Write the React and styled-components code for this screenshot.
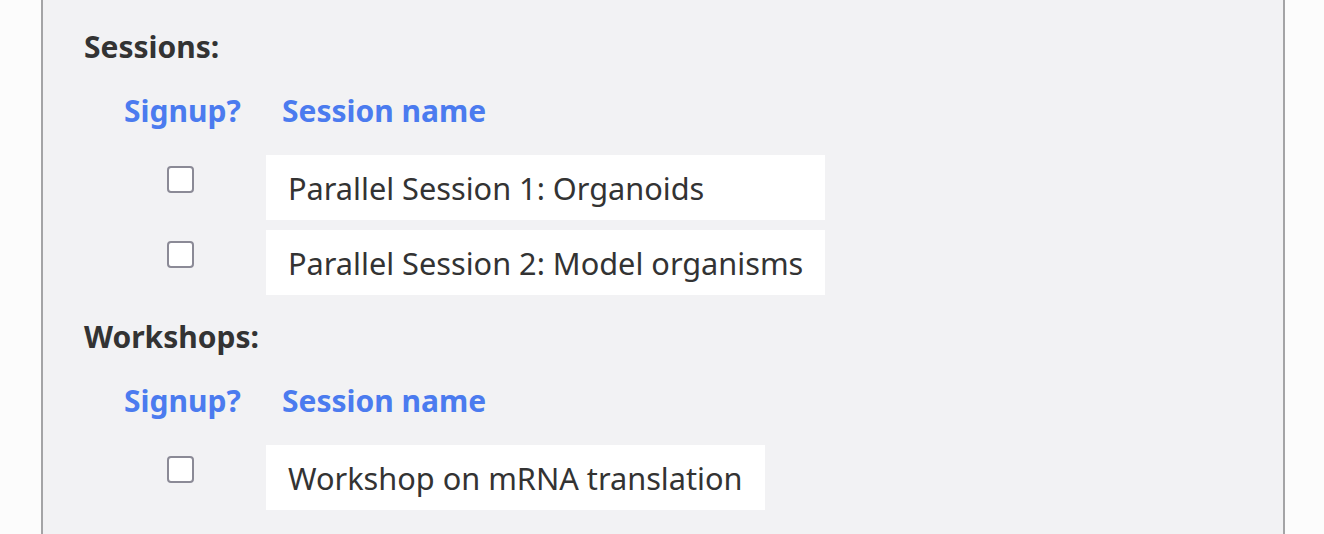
import styled, { createGlobalStyle } from 'styled-components';

const GlobalStyle = createGlobalStyle`
  html, body {
    margin: 0;
    padding: 0;
    background: #fcfcfc;
  }

  body {
    font-family: "Noto Sans", "Open Sans", sans-serif;
    color: #333333;
  }
`;

const sections = [
  {
    title: 'Sessions:',
    items: [
      'Parallel Session 1: Organoids',
      'Parallel Session 2: Model organisms',
    ],
  },
  {
    title: 'Workshops:',
    items: [ 'Workshop on mRNA translation' ],
  },
];

const SignupTable = ({ title, items }) => (
  <StyledSection>
    <SectionTitle>{title}</SectionTitle>
    <Table>
      <HeaderCell>Signup?</HeaderCell>
      <HeaderCell $name>Session name</HeaderCell>
      {items.map(item => (
        <Row key={item}>
          <CheckCell>
            <Checkbox type="checkbox" aria-label={item} />
          </CheckCell>
          <NameCell>{item}</NameCell>
        </Row>
      ))}
    </Table>
  </StyledSection>
);

const App = () => (
  <>
    <GlobalStyle />
    <Page>
      <Panel>
        {sections.map(section => (
          <SignupTable key={section.title} {...section} />
        ))}
      </Panel>
    </Page>
  </>
);

export default App;



const Page = styled.div`
  min-height: 100vh;
  padding-left: 41px;
`;

const Panel = styled.div`
  width: 1244px;
  min-height: 100vh;
  box-sizing: border-box;
  background: #f2f2f4;
  border-left: 2px solid #a4a4a6;
  border-right: 2px solid #a4a4a6;
  padding: 27px 0 0 41px;
`;

const StyledSection = styled.section`
  margin-bottom: 22px;
`;

const SectionTitle = styled.h3`
  margin: 0 0 24px;
  font-size: 30px;
  line-height: 40px;
  font-weight: 700;
  color: #333333;
`;

const Table = styled.div`
  display: grid;
  grid-template-columns: 142px max-content;
  row-gap: 10px;
  margin-left: 40px;
`;

const Row = styled.div`
  display: contents;
`;

const HeaderCell = styled.div`
  font-size: 30px;
  line-height: 40px;
  font-weight: 700;
  color: #4b7bef;
  padding-bottom: 14px;
  padding-left: ${props => props.$name ? '16px' : '0'};
  white-space: nowrap;
`;

const CheckCell = styled.div`
  width: 113px;
  display: flex;
  justify-content: center;
  align-items: center;
`;

const Checkbox = styled.input`
  appearance: none;
  margin: 0;
  width: 27px;
  height: 27px;
  box-sizing: border-box;
  border: 2px solid #8b8a96;
  border-radius: 4px;
  background: #ffffff;
  position: relative;
  top: -8px;
`;

const NameCell = styled.div`
  background: #ffffff;
  padding: 0 22px;
  height: 65px;
  display: flex;
  align-items: center;
  font-size: 30.7px;
  color: #333333;
  white-space: nowrap;
`;
